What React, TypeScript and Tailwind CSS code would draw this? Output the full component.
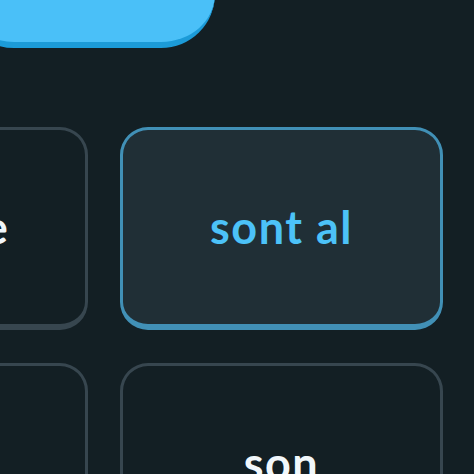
import React from "react";

type Choice = {
  label: string;
  selected?: boolean;
};

const choices: Choice[] = [
  { label: "la porte" },
  { label: "sont al", selected: true },
  { label: "jolie" },
  { label: "son" },
];

const ChoiceCard = ({ label, selected }: Choice) => {
  return (
    <div
      className={
        selected
          ? "h-[203px] flex items-center justify-center rounded-[28px] border-[3px] border-b-[6px] border-[#4190b6] bg-[#202f36]"
          : "h-[203px] flex items-center justify-center rounded-[28px] border-[3px] border-b-[6px] border-[#37464f] bg-[#131f24]"
      }
    >
      <span
        className={
          selected
            ? "text-[45px] font-bold tracking-[1.5px] text-[#4cc2f8] leading-none whitespace-nowrap"
            : "text-[45px] font-bold tracking-[1.5px] text-[#f1f7fb] leading-none whitespace-nowrap"
        }
        style={{ fontFamily: "Lato, 'Noto Sans', sans-serif" }}
      >
        {label}
      </span>
    </div>
  );
};

const App = () => {
  return (
    <div className="w-[474px] h-[474px] overflow-hidden bg-[#131f24]">
      <div className="mt-[-60px] ml-[-40px] w-[255px] h-[108px] rounded-[58px] bg-[#4ac0f8] border-b-[6px] border-[#1c9bd8]" />
      <div className="mt-[79px] ml-[-235px] grid grid-cols-[323px_323px] gap-x-[32px] gap-y-[33px]">
        {choices.map((item, index) => (
          <ChoiceCard key={index} label={item.label} selected={item.selected} />
        ))}
      </div>
    </div>
  );
};

export default App;
